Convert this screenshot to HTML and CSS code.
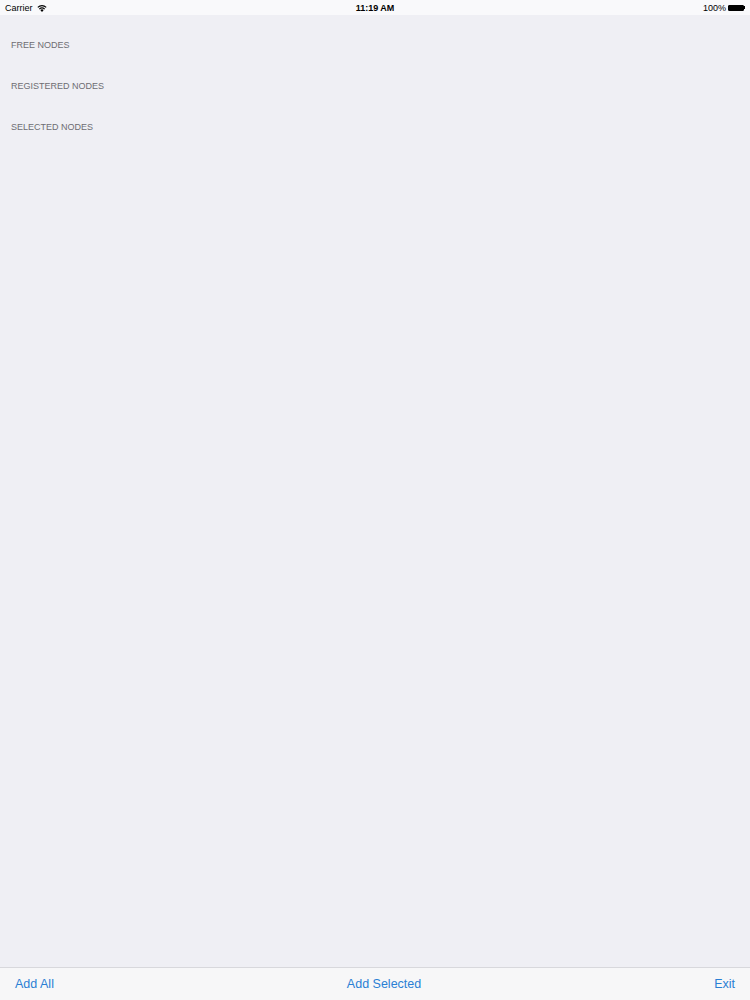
FILE: index.html
```html
<!DOCTYPE html>
<html>
<head>
<meta charset="utf-8">
<link rel="stylesheet" href="styles.css">
</head>
<body>
<div class="screen">
  <div class="status-bar">
    <div class="status-left">
      <span>Carrier</span>
      <svg class="wifi" width="10" height="8" viewBox="0 0 10 8">
        <path d="M5 8 L3.3 6.1 A2.4 2.4 0 0 1 6.7 6.1 Z" fill="#000"/>
        <path d="M2.3 5.1 A3.9 3.9 0 0 1 7.7 5.1" stroke="#000" stroke-width="1.1" fill="none"/>
        <path d="M0.8 3.3 A6 6 0 0 1 9.2 3.3" stroke="#000" stroke-width="1.1" fill="none"/>
      </svg>
    </div>
    <div class="status-time">11:19 AM</div>
    <div class="status-right">
      <span>100%</span>
      <span class="battery"><span class="battery-fill"></span></span><span class="battery-tip"></span>
    </div>
  </div>
  <main class="content">
    <div class="section-header">FREE NODES</div>
    <div class="section-header">REGISTERED NODES</div>
    <div class="section-header">SELECTED NODES</div>
  </main>
  <div class="toolbar">
    <a class="tool-btn">Add All</a>
    <a class="tool-btn">Add Selected</a>
    <a class="tool-btn">Exit</a>
  </div>
</div>
</body>
</html>
```
FILE: styles.css
```css
html, body {
  margin: 0;
  padding: 0;
}
body {
  font-family: "Liberation Sans", Arial, sans-serif;
  background: #efeff4;
}
.screen {
  width: 750px;
  height: 1000px;
  display: flex;
  flex-direction: column;
  background: #efeff4;
}
.status-bar {
  height: 15px;
  background: #f9f9fb;
  display: flex;
  align-items: center;
  justify-content: space-between;
  padding: 0 5px;
  font-size: 9px;
  color: #000;
  position: relative;
}
.status-left {
  display: flex;
  align-items: center;
  gap: 4px;
}
.wifi {
  display: block;
}
.status-time {
  position: absolute;
  left: 0;
  right: 0;
  text-align: center;
  font-weight: bold;
  font-size: 9px;
}
.status-right {
  display: flex;
  align-items: center;
  gap: 2px;
}
.battery {
  width: 16px;
  height: 6px;
  border: 1px solid #000;
  border-radius: 1px;
  padding: 0;
  display: flex;
  box-sizing: border-box;
  background: #000;
}
.battery-tip {
  width: 1px;
  height: 3px;
  background: #000;
  margin-left: -2px;
}
.content {
  flex: 1;
  padding-top: 24px;
}
.section-header {
  font-size: 9px;
  color: #6d6d72;
  padding-left: 11px;
  height: 41px;
  line-height: 12px;
}
.toolbar {
  height: 32px;
  border-top: 1px solid #d8d8dc;
  background: #f7f7f8;
  display: flex;
  align-items: center;
  justify-content: space-between;
  padding: 0 15px;
}
.tool-btn {
  font-size: 12.5px;
  color: #2a7fd4;
  cursor: pointer;
}
```
